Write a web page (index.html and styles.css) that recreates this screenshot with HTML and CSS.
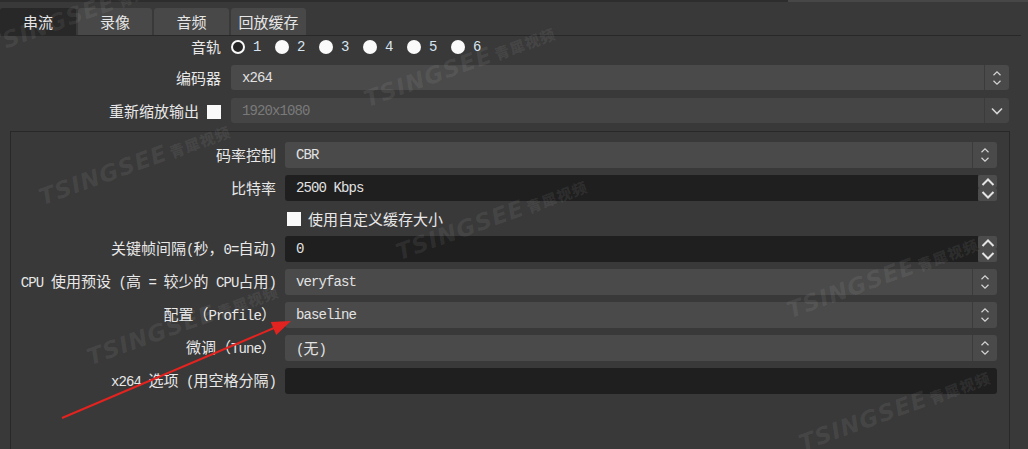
FILE: index.html
```html
<!DOCTYPE html>
<html lang="zh-CN">
<head>
    <meta charset="UTF-8">
    <meta name="viewport" content="width=device-width, initial-scale=1.0">
    <title>输出设置</title>
    <link rel="stylesheet" href="styles.css">
</head>
<body>
    <div class="top-strip"><div class="strip-dark"></div><div class="strip-light"></div></div>

    <!-- Pestañas -->
    <div class="tabs">
        <div class="tab active">串流</div>
        <div class="tab">录像</div>
        <div class="tab">音频</div>
        <div class="tab">回放缓存</div>
    </div>

    <div class="pane">
        <div class="form">
            <div class="row row-track">
                <div class="lbl">音轨</div>
                <div class="tracks">
                    <span class="track"><span class="radio checked"></span><span class="num">1</span></span>
                    <span class="track"><span class="radio"></span><span class="num">2</span></span>
                    <span class="track"><span class="radio"></span><span class="num">3</span></span>
                    <span class="track"><span class="radio"></span><span class="num">4</span></span>
                    <span class="track"><span class="radio"></span><span class="num">5</span></span>
                    <span class="track"><span class="radio"></span><span class="num">6</span></span>
                </div>
            </div>

            <div class="row">
                <div class="lbl">编码器</div>
                <div class="combo">
                    <span class="val mono">x264</span>
                    <span class="cbtn"><svg width="10" height="16" viewBox="0 0 10 16"><polyline points="1.5,5.2 5,1.8 8.5,5.2" /><polyline points="1.5,10.8 5,14.2 8.5,10.8" /></svg></span>
                </div>
            </div>

            <div class="row">
                <div class="lbl">重新缩放输出<span class="check"></span></div>
                <div class="combo disabled">
                    <span class="val mono">1920x1080</span>
                    <span class="cbtn"><svg class="drop" width="12" height="8" viewBox="0 0 12 8"><polyline points="1,1.5 6,6.5 11,1.5" /></svg></span>
                </div>
            </div>
        </div>

        <!-- Grupo del codificador -->
        <div class="group">
            <div class="row">
                <div class="lbl">码率控制</div>
                <div class="combo">
                    <span class="val mono">CBR</span>
                    <span class="cbtn"><svg width="10" height="16" viewBox="0 0 10 16"><polyline points="1.5,5.2 5,1.8 8.5,5.2" /><polyline points="1.5,10.8 5,14.2 8.5,10.8" /></svg></span>
                </div>
            </div>

            <div class="row">
                <div class="lbl">比特率</div>
                <div class="spin">
                    <span class="spin-field mono">2500 Kbps</span>
                    <span class="spin-btns">
                        <span class="sbtn"><svg width="14" height="8" viewBox="0 0 14 8"><polyline points="1.5,7 7,1.5 12.5,7" /></svg></span>
                        <span class="sbtn"><svg width="14" height="8" viewBox="0 0 14 8"><polyline points="1.5,1 7,6.5 12.5,1" /></svg></span>
                    </span>
                </div>
            </div>

            <div class="row check-row">
                <div class="lbl"></div>
                <span class="check"></span>
                <span class="check-text">使用自定义缓存大小</span>
            </div>

            <div class="row">
                <div class="lbl">关键帧间隔<span class="en">(</span>秒，<span class="en">0=</span>自动<span class="en">)</span></div>
                <div class="spin">
                    <span class="spin-field mono">0</span>
                    <span class="spin-btns">
                        <span class="sbtn"><svg width="14" height="8" viewBox="0 0 14 8"><polyline points="1.5,7 7,1.5 12.5,7" /></svg></span>
                        <span class="sbtn"><svg width="14" height="8" viewBox="0 0 14 8"><polyline points="1.5,1 7,6.5 12.5,1" /></svg></span>
                    </span>
                </div>
            </div>

            <div class="row">
                <div class="lbl"><span class="en">CPU&nbsp;</span>使用预设<span class="en">&nbsp;(</span>高<span class="en">&nbsp;=&nbsp;</span>较少的<span class="en">&nbsp;CPU</span>占用<span class="en">)</span></div>
                <div class="combo">
                    <span class="val mono">veryfast</span>
                    <span class="cbtn"><svg width="10" height="16" viewBox="0 0 10 16"><polyline points="1.5,5.2 5,1.8 8.5,5.2" /><polyline points="1.5,10.8 5,14.2 8.5,10.8" /></svg></span>
                </div>
            </div>

            <div class="row">
                <div class="lbl">配置（<span class="en">Profile</span>）</div>
                <div class="combo">
                    <span class="val mono">baseline</span>
                    <span class="cbtn"><svg width="10" height="16" viewBox="0 0 10 16"><polyline points="1.5,5.2 5,1.8 8.5,5.2" /><polyline points="1.5,10.8 5,14.2 8.5,10.8" /></svg></span>
                </div>
            </div>

            <div class="row">
                <div class="lbl">微调（<span class="en">Tune</span>）</div>
                <div class="combo">
                    <span class="val"><span class="en">(</span>无<span class="en">)</span></span>
                    <span class="cbtn"><svg width="10" height="16" viewBox="0 0 10 16"><polyline points="1.5,5.2 5,1.8 8.5,5.2" /><polyline points="1.5,10.8 5,14.2 8.5,10.8" /></svg></span>
                </div>
            </div>

            <div class="row">
                <div class="lbl"><span class="en">x264&nbsp;</span>选项<span class="en">&nbsp;(</span>用空格分隔<span class="en">)</span></div>
                <div class="line-edit"></div>
            </div>
        </div>
    </div>

    <!-- Marca de agua -->
    <div class="wm-layer">
        <span class="wm" style="left:-12px; top:33px;">TSINGSEE<b>青犀视频</b></span>
        <span class="wm" style="left:365px; top:86px;">TSINGSEE<b>青犀视频</b></span>
        <span class="wm" style="left:40px; top:184px;">TSINGSEE<b>青犀视频</b></span>
        <span class="wm" style="left:397px; top:239px;">TSINGSEE<b>青犀视频</b></span>
        <span class="wm" style="left:788px; top:297px;">TSINGSEE<b>青犀视频</b></span>
        <span class="wm" style="left:88px; top:344px;">TSINGSEE<b>青犀视频</b></span>
        <span class="wm" style="left:800px; top:430px;">TSINGSEE<b>青犀视频</b></span>
    </div>

    <!-- Flecha roja -->
    <svg class="arrow" width="1028" height="449" viewBox="0 0 1028 449">
        <line x1="62" y1="418" x2="274" y2="328" />
        <polygon points="291,321 276.2,334.9 270.8,322" />
    </svg>
</body>
</html>
```

FILE: styles.css
```css
body {
    margin: 0;
    background-color: #393939;
    color: #e8e8e8;
    font-family: "Noto Sans CJK SC", sans-serif;
    font-size: 15px;
    height: 449px;
    overflow: hidden;
    position: relative;
}

.top-strip {
    display: flex;
    height: 2px;
}

.strip-dark {
    width: 788px;
    background-color: #2d2d2d;
}

.strip-light {
    flex: 1;
    background-color: #474747;
}

/* pestañas */
.tabs {
    display: flex;
    gap: 2px;
    margin-top: 6px;
    height: 27px;
}

.tab {
    width: 75px;
    background-color: #484848;
    border-radius: 3px 3px 0 0;
    display: flex;
    align-items: center;
    justify-content: center;
    line-height: 1;
    color: #e6e6e6;
}

.tab:first-child {
    width: 76px;
}

.tab:nth-child(2) {
    width: 74px;
}

.tab.active {
    background-color: #282828;
}

.pane {
    border-top: 1px solid #282828;
    width: 1021px;
}

.form {
    width: 1009px;
}

.row {
    display: flex;
    align-items: center;
    margin-bottom: 8px;
}

.lbl {
    width: 221px;
    margin-right: 10px;
    text-align: right;
    line-height: 20px;
    white-space: nowrap;
    flex-shrink: 0;
}

.row-track {
    height: 22px;
    margin-bottom: 7px;
}

.tracks {
    display: flex;
}

.track {
    width: 44px;
    display: inline-flex;
    align-items: center;
}

.radio {
    width: 14px;
    height: 14px;
    border-radius: 50%;
    background-color: #fafafa;
    box-sizing: border-box;
}

.radio.checked {
    background-color: #262626;
    border: 2.5px solid #fafafa;
}

.num {
    margin-left: 8px;
    font-family: "Liberation Mono", monospace;
    font-size: 14px;
    color: #d8e4f0;
}

.mono,
.en {
    font-family: "Liberation Mono", monospace;
    font-size: 14px;
    letter-spacing: -0.9px;
}

.check {
    display: inline-block;
    width: 14px;
    height: 14px;
    background-color: #fafafa;
    margin-left: 8px;
    vertical-align: -2px;
    flex-shrink: 0;
}

/* combos */
.combo {
    flex: 1;
    height: 25px;
    background-color: #4a4a4a;
    border-radius: 3px;
    display: flex;
    align-items: center;
    color: #e2e2e2;
}

.combo .val {
    flex: 1;
    padding-left: 11px;
    line-height: 1;
}

.cbtn {
    width: 24px;
    height: 100%;
    border-left: 1px solid #3b3b3b;
    display: flex;
    align-items: center;
    justify-content: center;
}

.cbtn svg {
    fill: none;
    stroke: #d4d4d4;
    stroke-width: 1.2;
}

.cbtn svg.drop {
    stroke-width: 1.6;
}

.combo.disabled {
    background-color: #454545;
    color: #7a7a7a;
}

/* grupo */
.group {
    margin-left: 10px;
    width: 1000px;
    height: 340px;
    box-sizing: border-box;
    border: 1px solid #282828;
    border-bottom: none;
    padding: 10px 12px 0 0;
}

.group .row {
    margin-bottom: 7px;
}

.group .lbl {
    width: 265px;
    margin-right: 9px;
}

.group .combo {
    height: 26px;
}

.spin {
    flex: 1;
    height: 26px;
    display: flex;
}

.spin-field {
    flex: 1;
    background-color: #1f1f1f;
    border-radius: 3px 0 0 3px;
    padding-left: 11px;
    display: flex;
    align-items: center;
    line-height: 1;
    color: #e2e2e2;
}

.spin-btns {
    width: 19px;
    display: flex;
    flex-direction: column;
}

.sbtn {
    flex: 1;
    background-color: #4c4c4c;
    border-radius: 2px;
    display: flex;
    align-items: center;
    justify-content: center;
}

.sbtn svg {
    fill: none;
    stroke: #e4e4e4;
    stroke-width: 2;
}

.group .check-row {
    height: 21px;
}

.check-row .check {
    margin-left: 2px;
}

.check-text {
    margin-left: 7px;
    line-height: 1;
}

.line-edit {
    flex: 1;
    height: 26px;
    background-color: #1f1f1f;
    border-radius: 3px;
}

/* marca de agua */
.wm-layer {
    position: absolute;
    left: 0;
    top: 0;
    width: 1028px;
    height: 449px;
    overflow: hidden;
    pointer-events: none;
}

.wm {
    position: absolute;
    white-space: nowrap;
    transform-origin: 0 50%;
    transform: rotate(-20deg);
    font-family: "DejaVu Sans", sans-serif;
    font-style: italic;
    font-weight: 900;
    font-size: 23px;
    letter-spacing: 1px;
    line-height: 28px;
    color: rgba(255, 255, 255, 0.07);
}

.wm b {
    font-family: "Noto Sans CJK SC", sans-serif;
    font-style: normal;
    font-size: 15px;
    margin-left: 3px;
}

.arrow {
    position: absolute;
    left: 0;
    top: 0;
}

.arrow line {
    stroke: #e3231f;
    stroke-width: 2;
}

.arrow polygon {
    fill: #e3231f;
}
```
